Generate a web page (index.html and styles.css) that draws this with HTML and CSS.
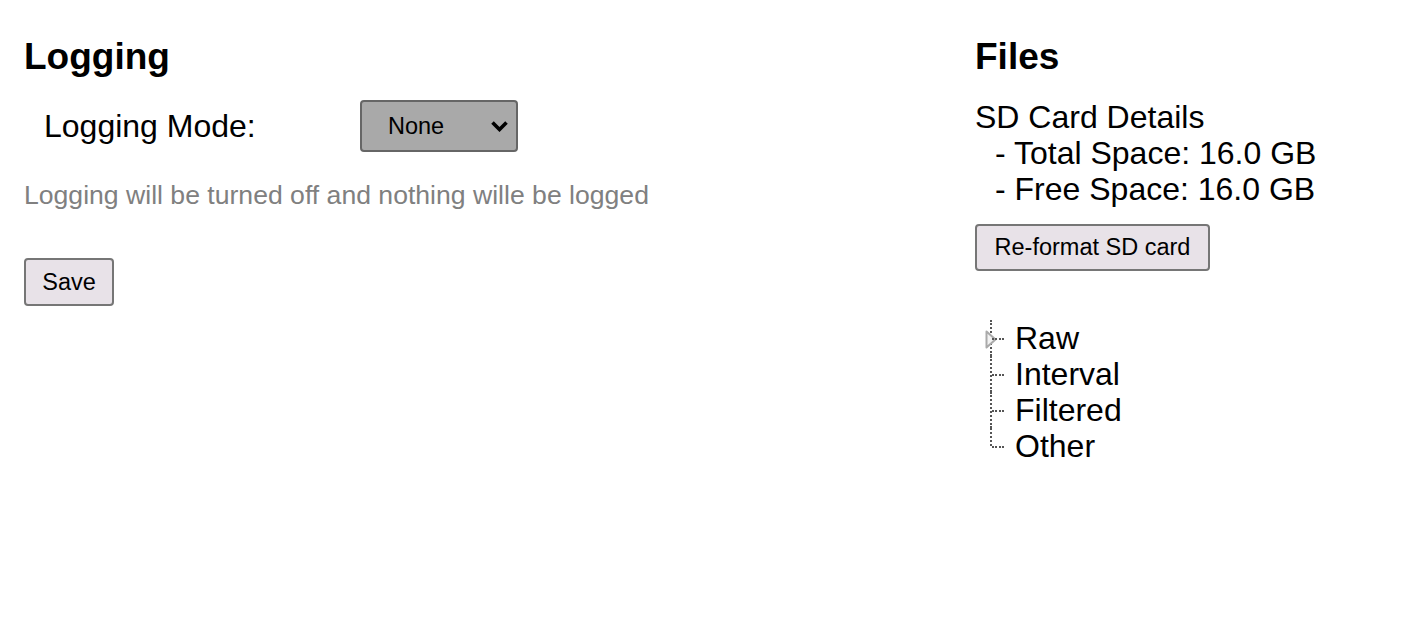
FILE: index.html
```html
<!DOCTYPE html>
<html>
<head>
<meta charset="utf-8">
<link rel="stylesheet" href="styles.css">
</head>
<body>
<div class="page">
  <section class="col col-logging">
    <h1 class="title">Logging</h1>
    <div class="mode-row">
      <label class="mode-label" for="mode">Logging Mode:</label>
      <span class="select-wrap">
        <select id="mode" class="mode-select">
          <option>None</option>
        </select>
        <svg class="chevron" width="19" height="12" viewBox="0 0 19 12"><path d="M2.5 2.5 L9.5 9.5 L16.5 2.5" fill="none" stroke="#000" stroke-width="3.6" stroke-linecap="butt" stroke-linejoin="miter"/></svg>
      </span>
    </div>
    <p class="hint">Logging will be turned off and nothing wille be logged</p>
    <button class="btn btn-save">Save</button>
  </section>
  <section class="col col-files">
    <h1 class="title">Files</h1>
    <div class="sd-details">
      <div>SD Card Details</div>
      <div class="sd-line">- Total Space: 16.0 GB</div>
      <div class="sd-line">- Free Space: 16.0 GB</div>
    </div>
    <button class="btn btn-format">Re-format SD card</button>
    <ul class="tree">
      <li class="tree-item has-children">
        <svg class="expander" width="12" height="19" viewBox="0 0 12 19"><path d="M1.5 1.5 L10.5 9.5 L1.5 17.5 Z" fill="#f2f2f2" stroke="#aaaaaa" stroke-width="2" stroke-linejoin="round"/></svg>
        Raw
      </li>
      <li class="tree-item">Interval</li>
      <li class="tree-item">Filtered</li>
      <li class="tree-item">Other</li>
    </ul>
  </section>
</div>
</body>
</html>
```
FILE: styles.css
```css
html, body {
  margin: 0;
  padding: 0;
  background: #fff;
}
body {
  font-family: "Liberation Sans", Arial, Helvetica, sans-serif;
  color: #000;
}
.page {
  display: grid;
  grid-template-columns: 951px 1fr;
  padding: 0 24px;
}
.col {
  display: flex;
  flex-direction: column;
  align-items: flex-start;
}
.title {
  margin: 36px 0 0 0;
  font-size: 37px;
  line-height: 42px;
  font-weight: bold;
}
.mode-row {
  display: flex;
  align-items: center;
  margin-top: 22px;
  padding-left: 20px;
}
.mode-label {
  width: 316px;
  font-size: 32px;
  line-height: 37px;
}
.select-wrap {
  position: relative;
  display: inline-block;
}
.mode-select {
  -webkit-appearance: none;
  appearance: none;
  width: 158px;
  height: 52px;
  margin: 0;
  padding: 0 0 0 26px;
  background: #a9a9a9;
  border: 2px solid #666;
  border-radius: 4px;
  font-family: "Liberation Sans", Arial, sans-serif;
  font-size: 23.5px;
  color: #000;
}
.chevron {
  position: absolute;
  right: 9px;
  top: 20px;
  pointer-events: none;
}
.hint {
  margin: 28px 0 0 0;
  font-size: 26.6px;
  line-height: 31px;
  color: #808080;
}
.btn {
  margin: 0;
  font-family: "Liberation Sans", Arial, sans-serif;
  font-size: 23.5px;
  color: #000;
  background: #e8e2e8;
  border: 2px solid #767676;
  border-radius: 4px;
}
.btn-save {
  margin-top: 47px;
  width: 90px;
  height: 48px;
  padding: 0;
}
.sd-details {
  margin-top: 21px;
  font-size: 32px;
  line-height: 36px;
}
.sd-line {
  padding-left: 20px;
}
.btn-format {
  margin-top: 17px;
  width: 235px;
  height: 47px;
  padding: 0;
}
.tree {
  list-style: none;
  margin: 49px 0 0 0;
  padding: 0 0 0 15px;
  font-size: 32px;
  line-height: 36px;
}
.tree-item {
  position: relative;
  padding-left: 25px;
}
.tree-item::before {
  content: "";
  position: absolute;
  left: 0;
  top: 0;
  bottom: 0;
  border-left: 2px dotted #555;
}
.tree-item:last-child::before {
  bottom: 50%;
}
.tree-item::after {
  content: "";
  position: absolute;
  left: 2px;
  top: 50%;
  width: 12px;
  border-top: 2px dotted #555;
}
.expander {
  position: absolute;
  left: -5px;
  top: 10px;
}
```
